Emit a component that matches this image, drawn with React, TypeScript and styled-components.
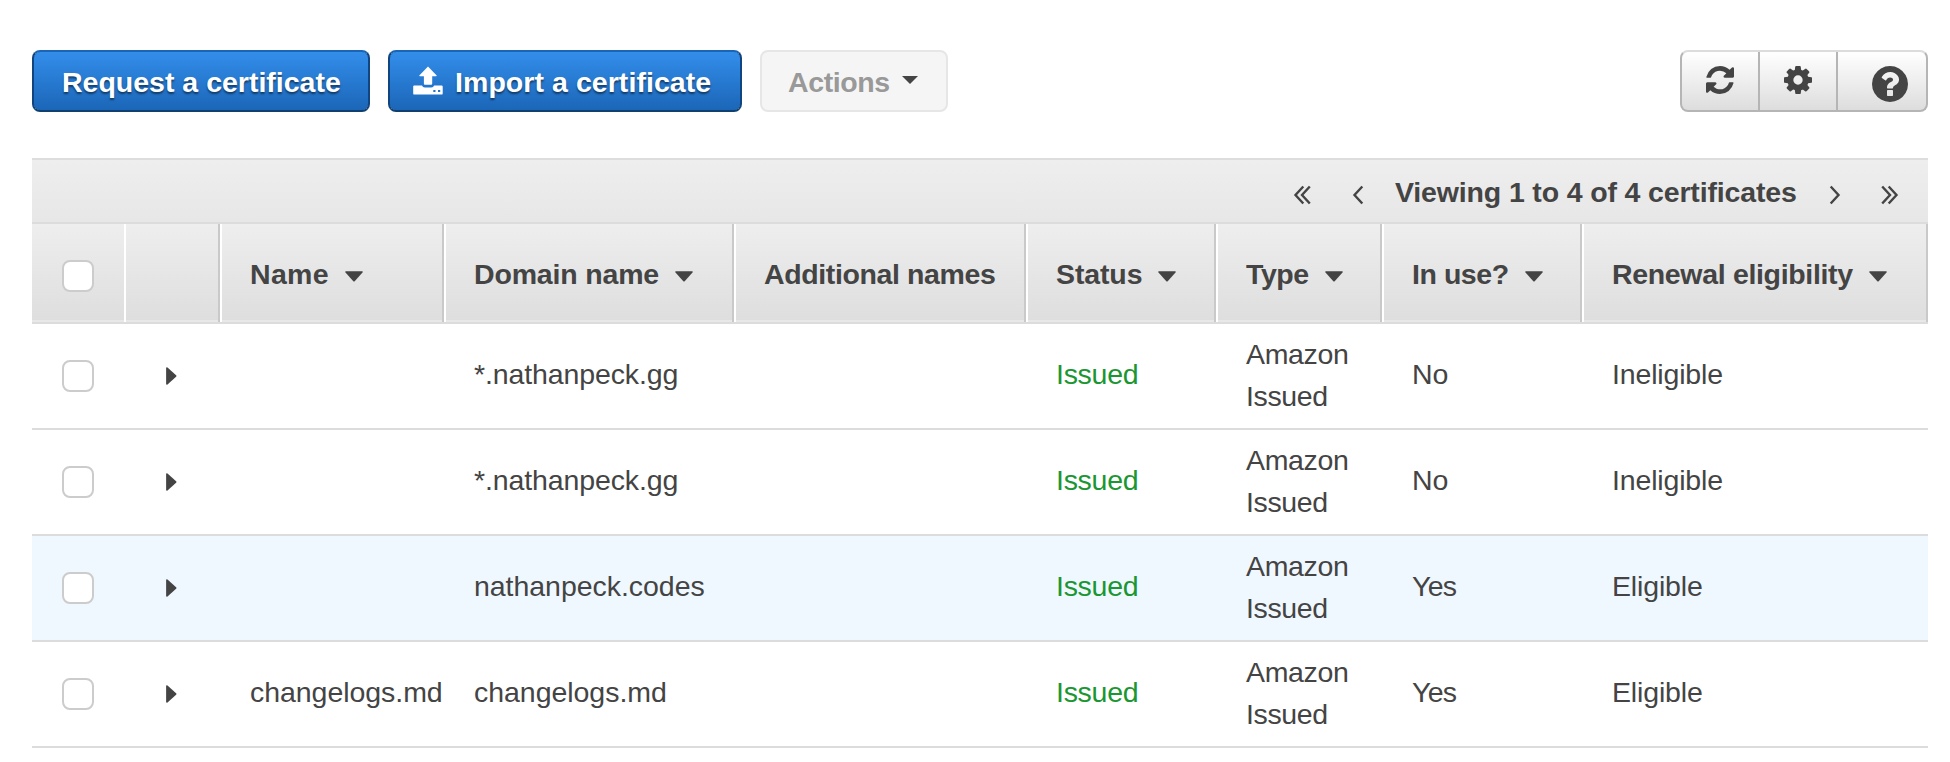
import React from 'react';
import styled, { createGlobalStyle, css } from 'styled-components';

const GlobalStyle = createGlobalStyle`
  * { box-sizing: border-box; }
  body {
    margin: 0;
    background: #fff;
    color: #444;
    font-family: "Liberation Sans", Arial, sans-serif;
    font-size: 28.5px;
  }
  button { font: inherit; color: inherit; }
`;

const Page = styled.main`
  padding: 50px 22px 0 32px;
`;

const Toolbar = styled.div`
  display: flex;
  height: 62px;
  gap: 18px;
`;

const buttonBase = css`
  display: flex;
  align-items: center;
  height: 62px;
  border-radius: 8px;
  font-weight: 700;
  white-space: nowrap;
`;

const PrimaryButton = styled.button<{ $width: number; $padLeft: number }>`
  ${buttonBase}
  width: ${(p) => p.$width}px;
  padding: 3px 0 0 ${(p) => p.$padLeft}px;
  border: 2px solid #11457f;
  border-top-color: #1a65b6;
  border-bottom-color: #10406f;
  background: linear-gradient(#338eea, #1b66b8) padding-box;
  background-color: #11457f;
  color: #fff;
  text-shadow: 0 2px 2px rgba(0, 0, 0, 0.5);
`;

const ImportLabel = styled.span`
  margin-left: 12px;
  letter-spacing: 0.06px;
`;

const ActionsButton = styled.button`
  ${buttonBase}
  width: 188px;
  padding: 3px 0 0 26px;
  border: 2px solid #e6e6e6;
  background: #f5f5f5;
  color: #999;
  letter-spacing: -0.4px;
`;

const ToolGroup = styled.div`
  display: flex;
  width: 248px;
  height: 62px;
  margin: 0 0 0 auto;
  border: 2px solid #b5b5b5;
  border-top-color: #dcdcdc;
  border-radius: 8px;
  background: linear-gradient(#fff, #ddd);
`;

const ToolButton = styled.button<{ $width: number; $padTop: number; $padLeft: number }>`
  display: flex;
  align-items: flex-start;
  width: ${(p) => p.$width}px;
  padding: ${(p) => p.$padTop}px 0 0 ${(p) => p.$padLeft}px;
  border: 0;
  background: none;
  & + & { border-left: 2px solid #b5b5b5; }
`;

const Icon = styled.svg<{ $w: number; $h: number; $ml?: number; $mt?: number }>`
  flex: none;
  display: block;
  width: ${(p) => p.$w}px;
  height: ${(p) => p.$h}px;
  margin-left: ${(p) => p.$ml ?? 0}px;
  margin-top: ${(p) => p.$mt ?? 0}px;
`;

const Panel = styled.section`
  width: 1896px;
  margin-top: 46px;
  border-top: 2px solid #ddd;
`;

const Pager = styled.div`
  display: flex;
  align-items: center;
  justify-content: flex-end;
  height: 64px;
  padding-right: 29px;
  border-bottom: 2px solid #dcdcdc;
  background: linear-gradient(#eee, #e7e7e7);
`;

const PagerText = styled.span`
  width: 402px;
  margin: 2px 32px 0 31px;
  font-weight: 700;
  letter-spacing: -0.15px;
  white-space: nowrap;
`;

const gridColumns = css`
  display: grid;
  grid-template-columns: 92px 96px 224px 290px 292px 190px 166px 200px 346px;
`;

const HeaderRow = styled.div`
  ${gridColumns}
  height: 100px;
  border-bottom: 2px solid #dcdcdc;
  background: linear-gradient(#eee, #dedede) 0 0 / 100% 96px no-repeat, #e8e8e8;
`;

const HeaderCell = styled.div<{ $first?: boolean; $spacing?: number }>`
  display: flex;
  align-items: center;
  padding: 2px 0 0 ${(p) => (p.$first ? 30 : 28)}px;
  border-left: ${(p) => (p.$first ? '0' : '2px solid #fff')};
  border-right: ${(p) => (p.$first ? '0' : '2px solid #c9c9c9')};
  font-weight: 700;
  letter-spacing: ${(p) => p.$spacing ?? 0}px;
  white-space: nowrap;
`;

const Row = styled.div<{ $highlight?: boolean }>`
  ${gridColumns}
  height: 106px;
  border-bottom: 2px solid #dcdcdc;
  background: ${(p) => (p.$highlight ? '#f0f8ff' : '#fff')};
`;

const Cell = styled.div<{ $spacing?: number; $success?: boolean }>`
  display: flex;
  align-items: center;
  padding: 0 0 4px 30px;
  color: ${(p) => (p.$success ? '#1a9632' : 'inherit')};
  letter-spacing: ${(p) => p.$spacing ?? 0}px;
  white-space: nowrap;
`;

const TypeCell = styled(Cell)`
  padding-bottom: 2px;
  line-height: 42px;
  white-space: normal;
`;

const ControlCell = styled.div<{ $padLeft: number }>`
  display: flex;
  align-items: center;
  padding-left: ${(p) => p.$padLeft}px;
`;

const Checkbox = styled.input.attrs({ type: 'checkbox' })<{ $mt?: number }>`
  appearance: none;
  flex: none;
  width: 32px;
  height: 32px;
  margin: ${(p) => p.$mt ?? 0}px 0 0;
  border: 2px solid #ccc;
  border-radius: 8px;
  background: #fff;
`;

const UploadIcon = () => (
  <Icon $w={30} $h={30} $mt={-4} viewBox="0 0 30 30" fill="#fff">
    <path d="M15 .6 L23.7 9.4 Q24 10.1 23 10.2 H19.2 V17.8 Q19.2 18.8 18.2 18.8 H11.900 Q10.900 18.800 10.900 17.800 V10.200 H7 Q6 10.100 6.300 9.400 Z" />
    <path
      fillRule="evenodd"
      d="M1.300 19.400 H9 Q9.700 21.500 11.800 21.500 H18.300 Q20.400 21.500 21.100 19.400 H28.500 Q29.700 19.400 29.700 20.600 V27.400 Q29.700 28.600 28.500 28.600 H1.400 Q.200 28.600 .200 27.400 V20.600 Q.200 19.400 1.300 19.400 Z M20.300 24.100 V26.100 H22.500 V24.100 Z M25 24.100 V26.100 H27.200 V24.100 Z"
    />
  </Icon>
);

const CaretIcon = () => (
  <Icon $w={16} $h={8} $ml={12} $mt={-5} viewBox="0 0 16 8" fill="#444">
    <path d="M0 0 H16 L8 8 Z" />
  </Icon>
);

const SortIcon = () => (
  <Icon $w={18} $h={11} $ml={16} $mt={5} viewBox="0 0 18 11" fill="#444">
    <path d="M.9 .2 H17.1 Q18.300 .400 17.500 1.500 L9.700 10.200 Q9 10.900 8.300 10.200 L.500 1.500 Q-.300 .400 .900 .200 Z" />
  </Icon>
);

const ExpandIcon = () => (
  <Icon $w={11} $h={18} viewBox="0 0 11 18" fill="#444">
    <path d="M.100 .900 Q.400 -.300 1.500 .500 L10.100 8.300 Q10.800 9 10.100 9.700 L1.500 17.500 Q.400 18.300 .100 17.100 Z" />
  </Icon>
);

const RefreshIcon = () => (
  <Icon $w={28} $h={28} viewBox="0 128 1536 1536" fill="#444">
    <path d="M1511 1056q0 5-1 7-64 268-268 434.500t-478 166.500q-146 0-282.500-55t-243.500-157l-129 129q-19 19-45 19t-45-19-19-45v-448q0-26 19-45t45-19h448q26 0 45 19t19 45-19 45l-137 137q71 66 161 102t187 36q134 0 250-65t186-179q11-17 53-117 8-23 30-23h192q13 0 22.500 9.500t9.500 22.500zm25-800v448q0 26-19 45t-45 19h-448q-26 0-45-19t-19-45 19-45l138-138q-148-137-349-137-134 0-250 65t-186 179q-11 17-53 117-8 23-30 23h-199q-13 0-22.500-9.500t-9.500-22.500v-7q65-268 270-434.500t480-166.500q146 0 284 55.500t245 156.500l130-129q19-19 45-19t45 19 19 45z" />
  </Icon>
);

const GearIcon = () => (
  <Icon $w={28} $h={28} viewBox="0 128 1536 1536" fill="#444">
    <path d="M1024 896q0-106-75-181t-181-75-181 75-75 181 75 181 181 75 181-75 75-181zm512-109v222q0 12-8 23t-20 13l-185 28q-19 54-39 91 35 50 107 138 10 12 10 25t-9 23q-27 37-99 108t-94 71q-12 0-26-9l-138-108q-44 23-91 38-16 136-29 186-7 28-36 28h-222q-14 0-24.500-8.500t-11.500-21.500l-28-184q-49-16-90-37l-141 107q-10 9-25 9-14 0-25-11-126-114-165-168-7-10-7-23 0-12 8-23 15-21 51-66.500t54-70.500q-27-50-41-99l-183-27q-13-2-21-12.500t-8-23.500v-222q0-12 8-23t19-13l186-28q14-46 39-92-40-57-107-138-10-12-10-24 0-10 9-23 26-36 98.500-107.500t94.500-71.500q13 0 26 10l138 107q44-23 91-38 16-136 29-186 7-28 36-28h222q14 0 24.500 8.500t11.500 21.500l28 184q49 16 90 37l142-107q9-9 24-9 13 0 25 10 129 119 165 170 7 8 7 22 0 12-8 23-15 21-51 66.500t-54 70.500q26 50 41 98l183 28q13 2 21 12.500t8 23.500z" />
  </Icon>
);

const HelpIcon = () => (
  <Icon $w={36} $h={36} viewBox="0 128 1536 1536" fill="#444">
    <path d="M896 1376v-192q0-14-9-23t-23-9h-192q-14 0-23 9t-9 23v192q0 14 9 23t23 9h192q14 0 23-9t9-23zm256-672q0-88-55.500-163t-138.500-116-170-41q-243 0-371 213-15 24 8 42l132 100q7 6 19 6 16 0 25-12 53-68 86-92 34-24 86-24 48 0 85.500 26t37.500 59q0 38-20 61t-68 45q-63 28-115.500 86.500t-52.500 125.500v36q0 14 9 23t23 9h192q14 0 23-9t9-23q0-19 21.500-49.500t54.500-49.500q32-18 49-28.500t46-35 44.500-48 28-60.500 12.500-81zm384 192q0 209-103 385.500t-279.500 279.500-385.500 103-385.500-103-279.500-279.500-103-385.500 103-385.500 279.500-279.500 385.500-103 385.500 103 279.500 279.500 103 385.500z" />
  </Icon>
);

const Chevron = ({ double, right, gap = 0 }: { double?: boolean; right?: boolean; gap?: number }) => (
  <Icon
    $w={double ? 18 : 12}
    $h={20}
    $ml={gap}
    $mt={7}
    viewBox={double ? '0 0 18 20' : '0 0 12 20'}
    fill="none"
    stroke="#444"
    strokeWidth="2.4"
  >
    <g transform={right ? `translate(${double ? 18 : 12} 0) scale(-1 1)` : undefined}>
      <path d="M10.300 1.500 L2.500 10 L10.300 18.500" />
      {double && <path d="M16.800 1.500 L9 10 L16.800 18.500" />}
    </g>
  </Icon>
);

const headers = [
  { label: 'Name', spacing: 0.3, sortable: true },
  { label: 'Domain name', spacing: -0.17, sortable: true },
  { label: 'Additional names', spacing: -0.38, sortable: false },
  { label: 'Status', spacing: -0.12, sortable: true },
  { label: 'Type', spacing: -0.4, sortable: true },
  { label: 'In use?', spacing: -0.45, sortable: true },
  { label: 'Renewal eligibility', spacing: -0.33, sortable: true },
];

const certificates = [
  { name: '', domain: '*.nathanpeck.gg', inUse: false, eligible: false, highlight: false },
  { name: '', domain: '*.nathanpeck.gg', inUse: false, eligible: false, highlight: false },
  { name: '', domain: 'nathanpeck.codes', inUse: true, eligible: true, highlight: true },
  { name: 'changelogs.md', domain: 'changelogs.md', inUse: true, eligible: true, highlight: false },
];

export default function App() {
  return (
    <>
      <GlobalStyle />
      <Page>
        <Toolbar>
          <PrimaryButton $width={338} $padLeft={28}>Request a certificate</PrimaryButton>
          <PrimaryButton $width={354} $padLeft={23}>
            <UploadIcon />
            <ImportLabel>Import a certificate</ImportLabel>
          </PrimaryButton>
          <ActionsButton disabled>
            Actions
            <CaretIcon />
          </ActionsButton>
          <ToolGroup>
            <ToolButton $width={76} $padTop={14} $padLeft={24} aria-label="Refresh"><RefreshIcon /></ToolButton>
            <ToolButton $width={78} $padTop={14} $padLeft={24} aria-label="Settings"><GearIcon /></ToolButton>
            <ToolButton $width={90} $padTop={14} $padLeft={34} aria-label="Help"><HelpIcon /></ToolButton>
          </ToolGroup>
        </Toolbar>

        <Panel>
          <Pager>
            <Chevron double />
            <Chevron gap={41} />
            <PagerText>Viewing 1 to 4 of 4 certificates</PagerText>
            <Chevron right />
            <Chevron double right gap={40} />
          </Pager>
          <HeaderRow>
            <HeaderCell $first><Checkbox $mt={4} /></HeaderCell>
            <HeaderCell />
            {headers.map((h) => (
              <HeaderCell key={h.label} $spacing={h.spacing}>
                {h.label}
                {h.sortable && <SortIcon />}
              </HeaderCell>
            ))}
          </HeaderRow>
          {certificates.map((c, i) => (
            <Row key={i} $highlight={c.highlight}>
              <ControlCell $padLeft={30}><Checkbox /></ControlCell>
              <ControlCell $padLeft={42}><ExpandIcon /></ControlCell>
              <Cell $spacing={-0.05}>{c.name}</Cell>
              <Cell $spacing={c.domain.startsWith('*') ? -0.12 : -0.04}>{c.domain}</Cell>
              <Cell />
              <Cell $spacing={-0.28} $success>Issued</Cell>
              <TypeCell $spacing={-0.35}>Amazon Issued</TypeCell>
              <Cell $spacing={c.inUse ? -0.7 : 0}>{c.inUse ? 'Yes' : 'No'}</Cell>
              <Cell $spacing={-0.16}>{c.eligible ? 'Eligible' : 'Ineligible'}</Cell>
            </Row>
          ))}
        </Panel>
      </Page>
    </>
  );
}
